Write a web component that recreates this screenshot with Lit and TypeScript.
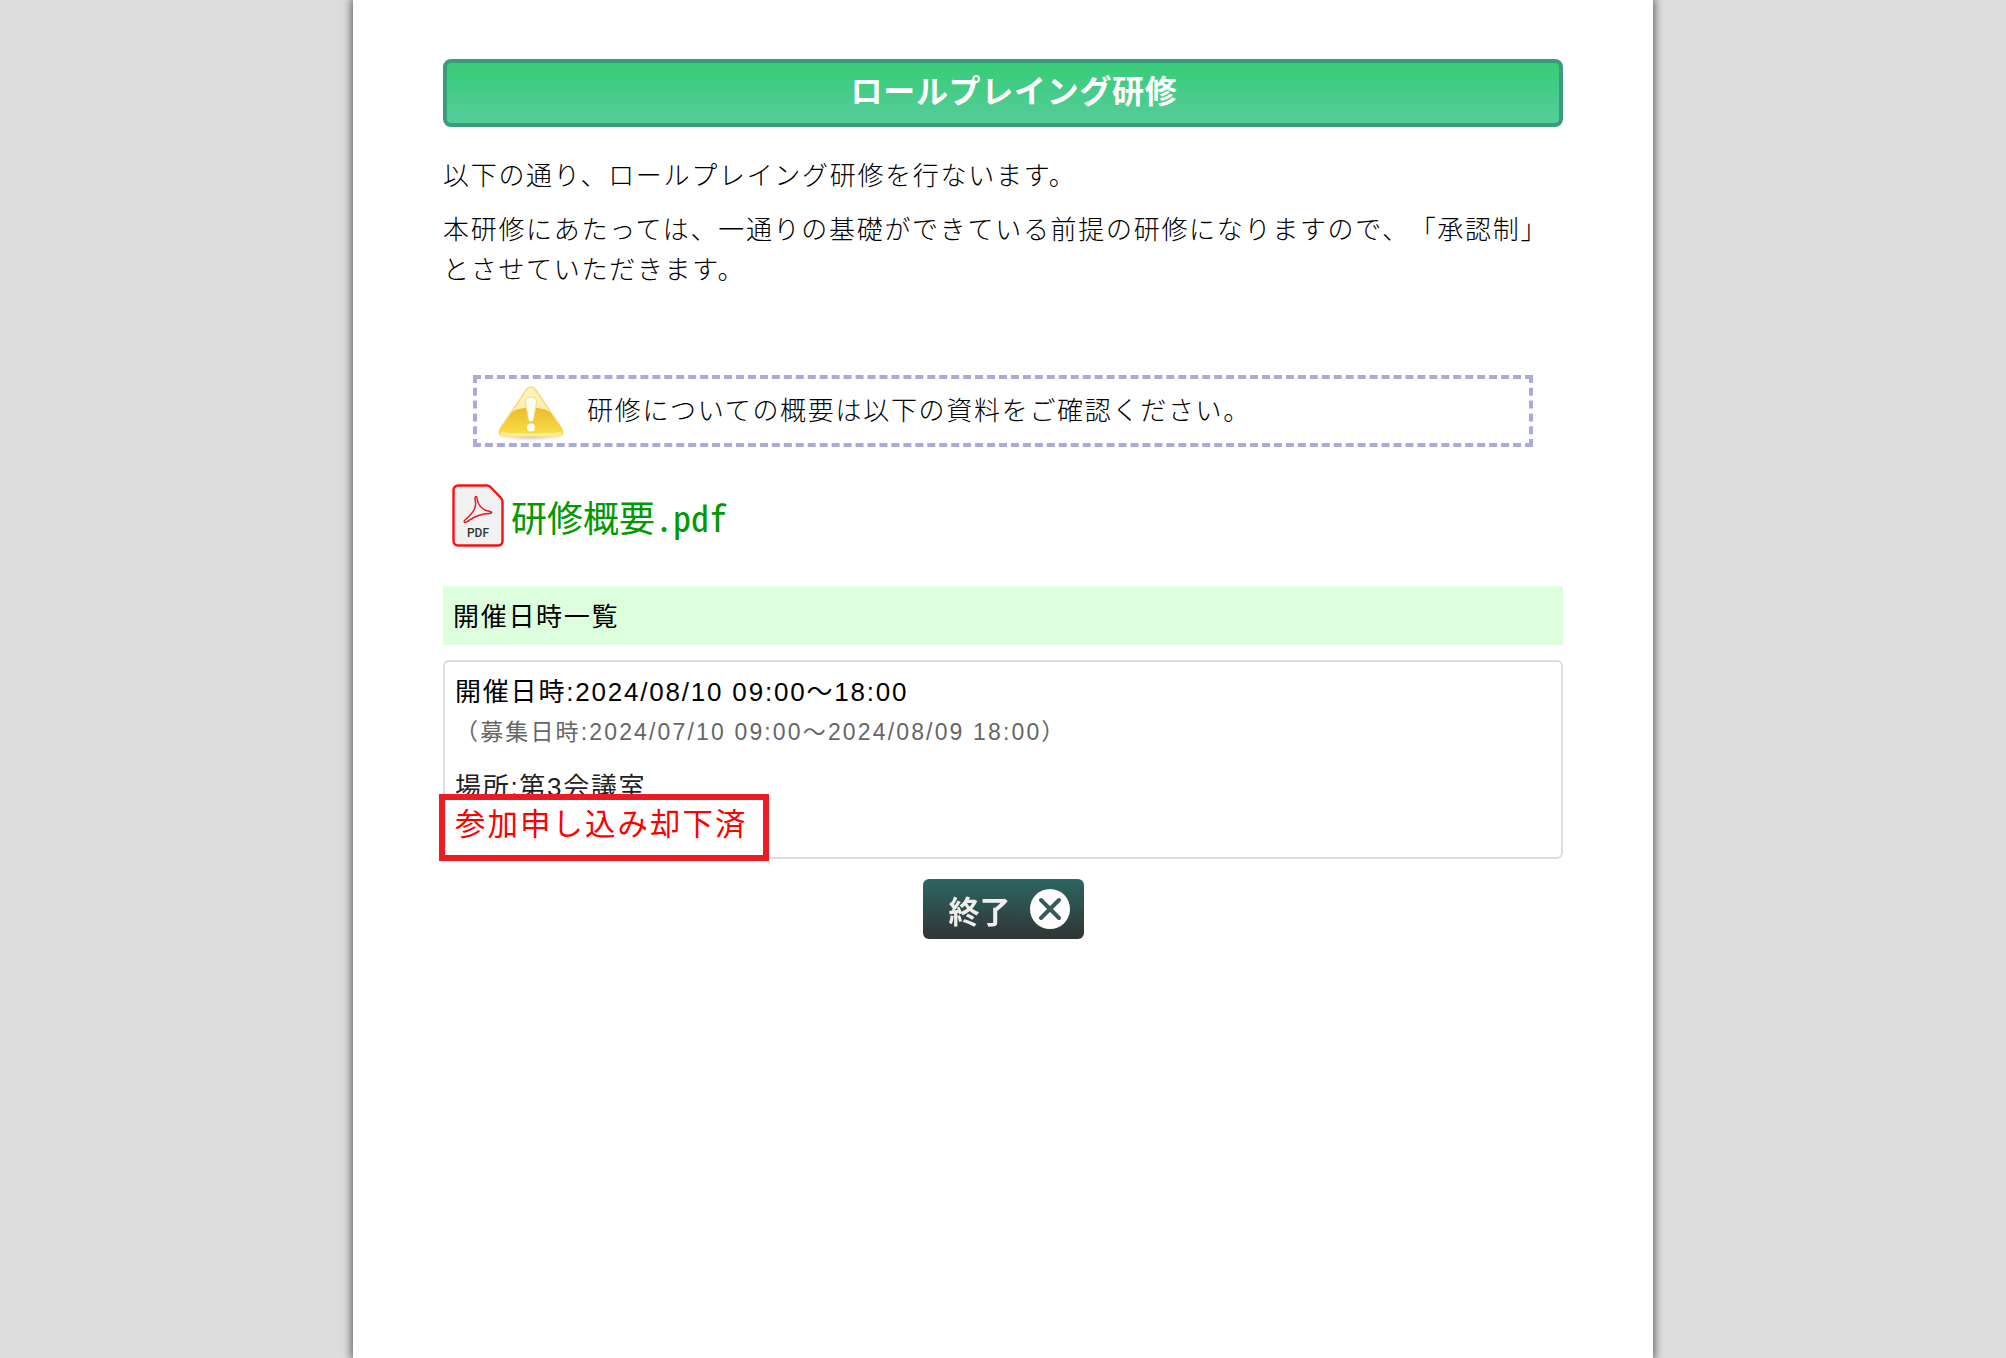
import { LitElement, html, css } from "lit";
import { customElement } from "lit/decorators.js";

const warnIcon = html`<svg class="warn" viewBox="0 0 68 60" width="68" height="60">
  <defs>
    <linearGradient id="wTop" x1="0" y1="0" x2="0" y2="1"><stop offset="0" stop-color="#fff3c0"/><stop offset="1" stop-color="#fbe79c"/></linearGradient>
    <linearGradient id="wBot" x1="0" y1="0" x2="0" y2="1"><stop offset="0" stop-color="#e9bb2c"/><stop offset="1" stop-color="#fbdf4c"/></linearGradient>
    <radialGradient id="wSh"><stop offset="0" stop-color="#999" stop-opacity=".5"/><stop offset="1" stop-color="#999" stop-opacity="0"/></radialGradient>
  </defs>
  <ellipse cx="34" cy="56" rx="33" ry="4" fill="url(#wSh)"/>
  <path d="M34 6 C36.500 6 38 7.500 39.500 10 L65 48 C67 52 65 55 61 55 L7 55 C3 55 1 52 3 48 L28.500 10 C30 7.500 31.500 6 34 6 Z" fill="url(#wTop)" stroke="#fbd97f" stroke-width="1.500"/>
  <path d="M15 31 C24 25 44 25 53 31 L65 48 C67 52 65 55 61 55 L7 55 C3 55 1 52 3 48 Z" fill="url(#wBot)"/>
  <path d="M4 51 C20 53 48 53 64 51 C65 54 63 55 61 55 L7 55 C5 55 3 54 4 51 Z" fill="#fff2a0" opacity=".8"/>
  <path d="M34 16 C38.500 16 40 19 39.500 22 L36.500 39 C36 41 32 41 31.500 39 L28.500 22 C28 19 29.500 16 34 16 Z" fill="#fffdf2" stroke="#eed98a" stroke-width="1"/>
  <circle cx="34" cy="46.500" r="4" fill="#fffdf2"/>
</svg>`;

const pdfIcon = html`<svg class="pdf" viewBox="0 0 52 63" width="52" height="63">
  <path d="M6 1.500 L35 1.500 C36.500 1.500 37.500 2 38.500 3 L49 14 C50 15 50.500 16 50.500 17.500 L50.500 57 C50.500 60 48.500 61.500 46 61.500 L6 61.500 C3.500 61.500 1.500 60 1.500 57 L1.500 6 C1.500 3.500 3.500 1.500 6 1.500 Z" fill="#f1f1f1" stroke="#fb0f16" stroke-width="2.400"/>
  <path d="M24 12.500 C22.800 12.500 22.800 15 23.500 18 C24.500 24 19 31 13.500 35.500 C11 37.500 12.500 39 14.500 38 C19 35.500 25 29.500 37 29.500 C40 29.500 40.500 27.800 38 27.500 C32 26.500 28 23.500 26 18.500 C25 16 25.500 12.500 24 12.500 Z" fill="none" stroke="#ec1018" stroke-width="1.400" stroke-linejoin="round"/>
  <text x="26" y="53" text-anchor="middle" class="pdft">PDF</text>
</svg>`;

@customElement("app-root")
export class AppRoot extends LitElement {
  static styles = css`
    :host {
      display: block;
      height: 1358px;
      overflow: hidden;
      background: #dddddd;
      font-family: "Liberation Sans", "Noto Sans CJK JP", sans-serif;
      color: #000;
      text-spacing-trim: space-all;
    }
    .panel {
      position: relative;
      box-sizing: border-box;
      width: 1300px;
      height: 1358px;
      margin: 0 auto;
      padding: 59px 90px 0;
      background: #fff;
      box-shadow: 0 0 8px 2px #666;
    }
    .title {
      box-sizing: border-box;
      height: 68px;
      margin: 0;
      padding: 0 0 8px 22px;
      display: flex;
      align-items: center;
      justify-content: center;
      border: 4px solid #3a9c7c;
      border-radius: 8px;
      background: linear-gradient(#39cc78 0%, #40cc82 30%, #56cc9a 100%);
      color: #fff;
      font-size: 32px;
      font-weight: 700;
      letter-spacing: 0.7px;
    }
    p {
      margin: 0;
      font-size: 26px;
      letter-spacing: 1.7px;
      line-height: 40px;
      font-weight: 300;
    }
    .p1 { margin-top: 29px; }
    .p2 { margin-top: 14px; }
    .notice {
      box-sizing: border-box;
      width: 1060px;
      height: 72px;
      margin: 85px auto 0;
      padding-left: 20px;
      display: flex;
      align-items: center;
      gap: 22px;
      border: 4px dashed #aaaadd;
    }
    .notice span {
      font-size: 26px;
      letter-spacing: 1.7px;
      font-weight: 300;
      margin-top: -5px;
    }
    .warn { flex: none; filter: blur(0.5px); }
    .file {
      display: flex;
      align-items: center;
      gap: 7px;
      margin: 37px 0 0 9px;
      height: 63px;
      color: #009900;
      font-family: "Noto Sans CJK JP", sans-serif;
      font-feature-settings: "hwid";
      font-size: 36px;
      font-weight: 400;
    }
    .file a { color: inherit; text-decoration: none; margin-top: 1px; }
    .pdf { flex: none; }
    .pdft {
      font-family: "Roboto", "Liberation Sans", sans-serif;
      font-feature-settings: normal;
      font-size: 12px;
      font-weight: 500;
      fill: #333;
    }
    .sect {
      box-sizing: border-box;
      height: 59px;
      margin-top: 39px;
      padding: 0 0 3px 10px;
      display: flex;
      align-items: center;
      background: #ddffdd;
      font-size: 26px;
      letter-spacing: 1.7px;
    }
    .box {
      box-sizing: border-box;
      height: 199px;
      margin-top: 15px;
      padding: 11px 10px;
      border: 2px solid #dddddd;
      border-radius: 6px;
    }
    .when { font-size: 26px; line-height: 38px; letter-spacing: 1.8px; }
    .recruit { font-size: 23px; line-height: 43px; letter-spacing: 2.15px; color: #666; }
    .place { font-size: 26px; line-height: 38px; letter-spacing: 1.7px; margin-top: 14px; color: #222; }
    .status {
      position: absolute;
      left: 86px;
      top: 794px;
      box-sizing: border-box;
      width: 330px;
      height: 67px;
      padding: 0 0 12px 10px;
      display: flex;
      align-items: center;
      background: #fff;
      border: 6px solid #ed1c24;
      color: #ff0000;
      font-size: 30.400px;
      letter-spacing: 2.100px;
    }
    .actions { display: flex; justify-content: center; margin-top: 20px; }
    .close {
      box-sizing: border-box;
      width: 161px;
      height: 60px;
      padding: 0 0 0 26px;
      display: flex;
      align-items: center;
      gap: 19px;
      border: 0;
      border-radius: 6px;
      background: linear-gradient(#2c6662, #313434);
      color: #eee;
      font-family: "Noto Sans CJK JP", sans-serif;
      font-size: 31px;
      font-weight: 700;
      filter: blur(0.7px);
    }
    .close svg { flex: none; }
  `;

  render() {
    return html`
      <div class="panel">
        <h1 class="title">ロールプレイング研修</h1>
        <p class="p1">以下の通り、ロールプレイング研修を行ないます。</p>
        <p class="p2">本研修にあたっては、一通りの基礎ができている前提の研修になりますので、「承認制」とさせていただきます。</p>
        <div class="notice">${warnIcon}<span>研修についての概要は以下の資料をご確認ください。</span></div>
        <div class="file">${pdfIcon}<a href="#">研修概要.pdf</a></div>
        <div class="sect">開催日時一覧</div>
        <div class="box">
          <div class="when">開催日時:2024/08/10 09:00～18:00</div>
          <div class="recruit">（募集日時:2024/07/10 09:00～2024/08/09 18:00）</div>
          <div class="place">場所:第3会議室</div>
        </div>
        <div class="status">参加申し込み却下済</div>
        <div class="actions">
          <button class="close">終了
            <svg viewBox="0 0 40 40" width="40" height="40">
              <circle cx="20" cy="20" r="20" fill="#fff"/>
              <path d="M11 11 L29 29 M29 11 L11 29" stroke="#3a5a58" stroke-width="4" stroke-linecap="round"/>
            </svg>
          </button>
        </div>
      </div>
    `;
  }
}
